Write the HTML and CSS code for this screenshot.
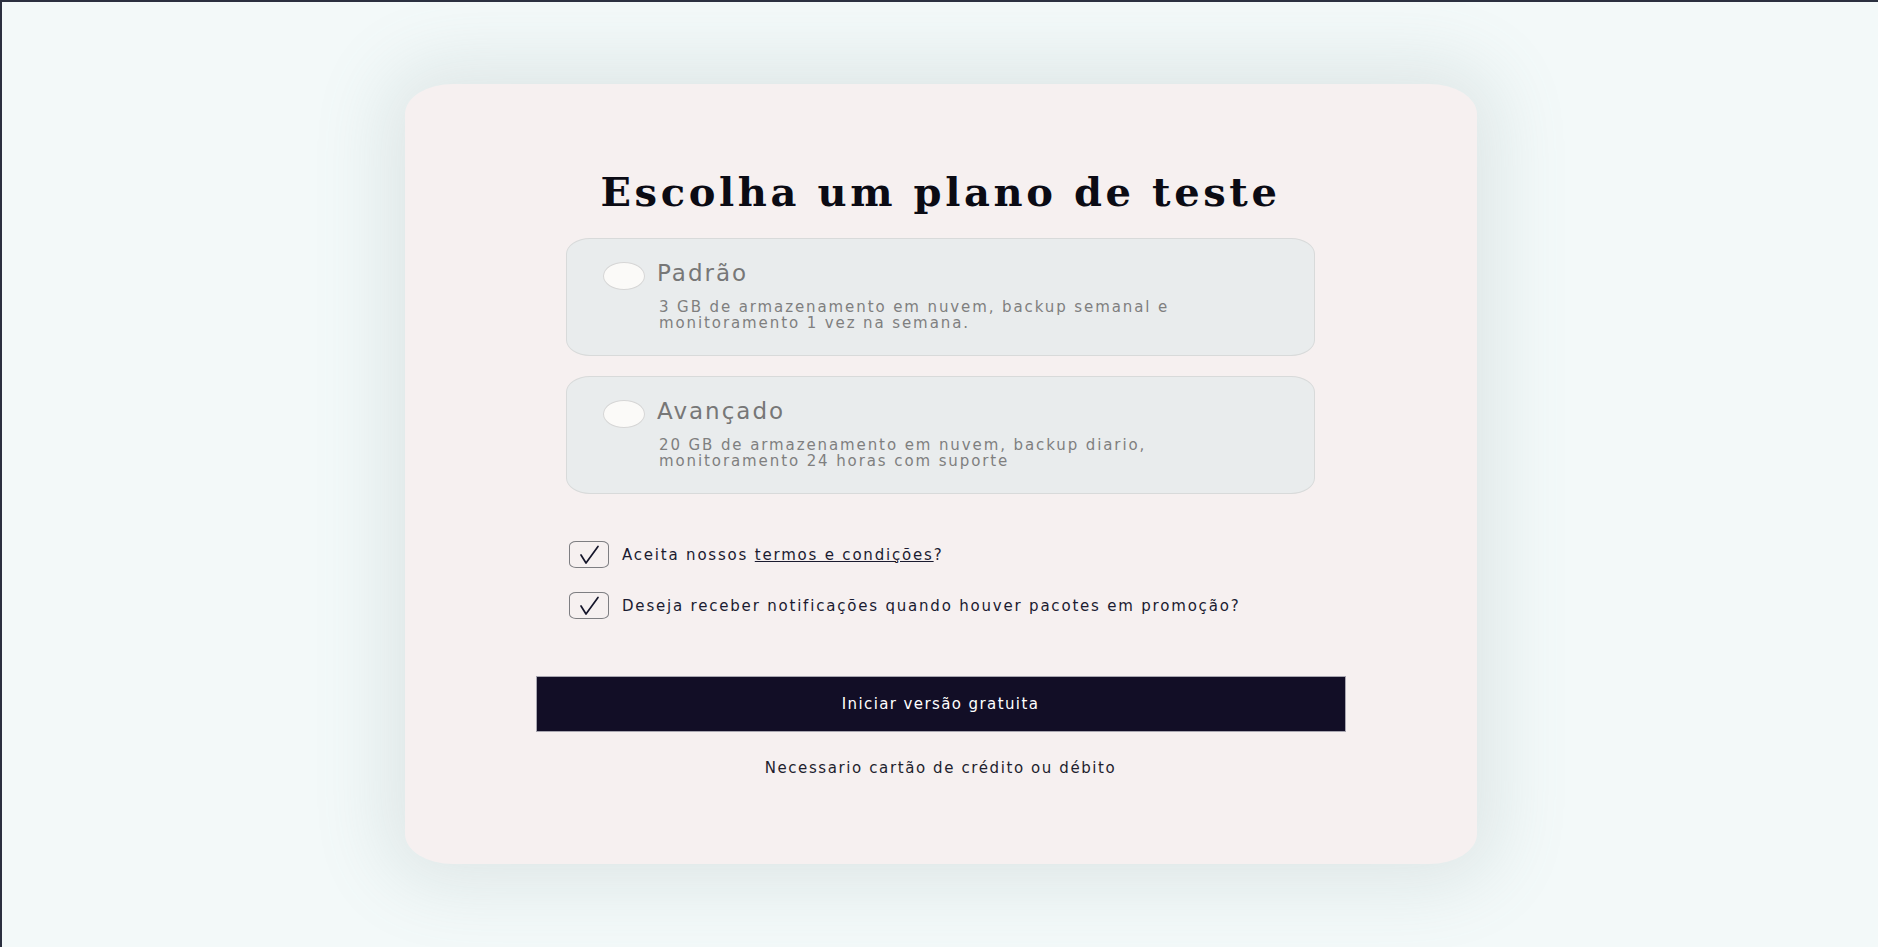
FILE: index.html
```html
<!DOCTYPE html>
<html lang="pt-BR">
<head>
<meta charset="utf-8">
<title>Escolha um plano de teste</title>
<link rel="stylesheet" href="styles.css">
</head>
<body>
<main class="page">
  <section class="card">
    <h1 class="title">Escolha um plano de teste</h1>
    <div class="plans">
      <label class="plan">
        <span class="radio"></span>
        <span class="plan-body">
          <span class="plan-name">Padrão</span>
          <span class="plan-desc">3 GB de armazenamento em nuvem, backup semanal e monitoramento 1 vez na semana.</span>
        </span>
      </label>
      <label class="plan">
        <span class="radio"></span>
        <span class="plan-body">
          <span class="plan-name">Avançado</span>
          <span class="plan-desc">20 GB de armazenamento em nuvem, backup diario, monitoramento 24 horas com suporte</span>
        </span>
      </label>
    </div>
    <div class="checks">
      <label class="check">
        <span class="box"><svg viewBox="0 0 40 27" width="40" height="27"><polyline points="12,14 17,22 29,5.5" fill="none" stroke="#15152a" stroke-width="1.7" stroke-linecap="round" stroke-linejoin="round"/></svg></span>
        <span class="check-text">Aceita nossos <a class="link" href="#">termos e condições</a>?</span>
      </label>
      <label class="check">
        <span class="box"><svg viewBox="0 0 40 27" width="40" height="27"><polyline points="12,14 17,22 29,5.5" fill="none" stroke="#15152a" stroke-width="1.7" stroke-linecap="round" stroke-linejoin="round"/></svg></span>
        <span class="check-text">Deseja receber notificações quando houver pacotes em promoção?</span>
      </label>
    </div>
    <button class="cta" type="button">Iniciar versão gratuita</button>
    <p class="note">Necessario cartão de crédito ou débito</p>
  </section>
</main>
</body>
</html>
```

FILE: styles.css
```css
* { box-sizing: border-box; }

html, body {
  margin: 0;
  padding: 0;
  height: 100%;
}

body {
  background: #f3f9f9;
  border-top: 2px solid #2b3040;
  border-left: 2px solid #2b3040;
  font-family: "DejaVu Sans", "Liberation Sans", sans-serif;
}

.page {
  display: flex;
  justify-content: center;
  padding-top: 82px;
}

.card {
  width: 1072px;
  margin-left: 1px;
  background: #f6f0f0;
  border-radius: 48px / 30px;
  box-shadow: 0 0 70px 22px rgba(120, 140, 140, 0.16);
  display: flex;
  flex-direction: column;
  align-items: center;
  padding: 84px 0 87px;
}

.title {
  margin: 0;
  font-family: "DejaVu Serif", "Liberation Serif", serif;
  font-weight: bold;
  font-size: 40px;
  line-height: 47px;
  letter-spacing: 3.6px;
  color: #0b0b14;
}

.plans {
  margin-top: 23px;
  display: flex;
  flex-direction: column;
  gap: 20px;
  width: 749px;
}

.plan {
  display: flex;
  align-items: flex-start;
  gap: 12px;
  height: 118px;
  padding: 20px 36px 0;
  background: #e9eced;
  border: 1px solid #d8dada;
  border-radius: 24px / 16px;
}

.radio {
  flex: none;
  width: 42px;
  height: 28px;
  margin-top: 3px;
  border-radius: 50%;
  background: #fbfaf8;
  border: 1px solid #d6d6d6;
}

.plan-body {
  display: flex;
  flex-direction: column;
}

.plan-name {
  font-size: 23px;
  line-height: 28px;
  letter-spacing: 2px;
  color: #777777;
}

.plan-desc {
  margin-top: 12px;
  margin-left: 2px;
  width: 580px;
  font-size: 15px;
  line-height: 16px;
  letter-spacing: 1.9px;
  color: #7f7f7f;
}

.checks {
  margin-top: 47px;
  width: 749px;
  padding-left: 3px;
  display: flex;
  flex-direction: column;
  gap: 24px;
}

.check {
  display: flex;
  align-items: center;
  gap: 13px;
}

.box {
  flex: none;
  width: 40px;
  height: 27px;
  border: 1.5px solid #7e7e82;
  border-radius: 7px / 5px;
  display: flex;
}

.box svg {
  display: block;
  margin: -1.5px;
}

.check-text {
  font-size: 15px;
  line-height: 18px;
  letter-spacing: 1.8px;
  color: #1b1b30;
}

.link {
  color: #1b1b30;
  text-decoration: underline;
}

.cta {
  margin-top: 57px;
  width: 810px;
  height: 56px;
  background: #120e26;
  border: 1px solid #a8a6b0;
  color: #ffffff;
  font-family: "DejaVu Sans", "Liberation Sans", sans-serif;
  font-size: 15px;
  letter-spacing: 1.4px;
  padding: 0;
}

.note {
  margin: 27px 0 0;
  font-size: 15px;
  line-height: 18px;
  letter-spacing: 1.6px;
  color: #1e1e2e;
}
```
